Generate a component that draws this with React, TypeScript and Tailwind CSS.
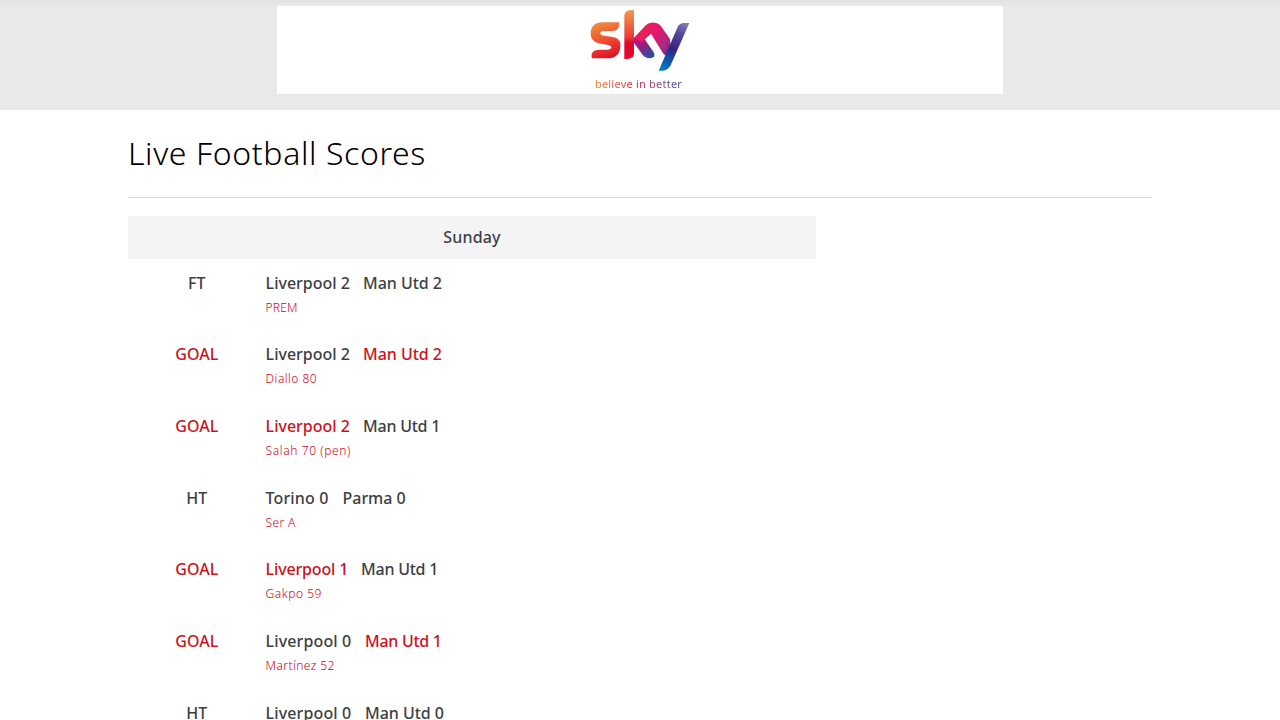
type Match = {
  status: string;
  home: string;
  away: string;
  note: string;
  scored?: "home" | "away";
  homeWidth: string;
  awayStyle?: string;
  homeStyle?: string;
  noteStyle: string;
};

const matches: Match[] = [
  { status: "FT", home: "Liverpool 2", away: "Man Utd 2", note: "PREM", homeWidth: "w-[97.5px]", noteStyle: "tracking-[0.2px]" },
  { status: "GOAL", home: "Liverpool 2", away: "Man Utd 2", note: "Diallo 80", scored: "away", homeWidth: "w-[97.5px]", noteStyle: "tracking-[0.48px]" },
  { status: "GOAL", home: "Liverpool 2", away: "Man Utd 1", note: "Salah 70 (pen)", scored: "home", homeWidth: "w-[97.5px]", awayStyle: "tracking-[-0.25px]", noteStyle: "tracking-[0.6px]" },
  { status: "HT", home: "Torino 0", away: "Parma 0", note: "Ser A", homeWidth: "w-[77px]", homeStyle: "tracking-[0.12px]", noteStyle: "tracking-[0.35px]" },
  { status: "GOAL", home: "Liverpool 1", away: "Man Utd 1", note: "Gakpo 59", scored: "home", homeWidth: "w-[95.5px]", homeStyle: "tracking-[-0.16px]", awayStyle: "tracking-[-0.25px]", noteStyle: "tracking-[0.52px]" },
  { status: "GOAL", home: "Liverpool 0", away: "Man Utd 1", note: "Martínez 52", scored: "away", homeWidth: "w-[99.5px]", homeStyle: "tracking-[0.12px]", awayStyle: "tracking-[-0.3px]", noteStyle: "tracking-[0.42px]" },
  { status: "HT", home: "Liverpool 0", away: "Man Utd 0", note: "PREM", homeWidth: "w-[99.5px]", homeStyle: "tracking-[0.12px]", noteStyle: "tracking-[0.2px]" },
];

function Logo() {
  return (
    <svg width="104" height="66" viewBox="54 24 312 198" fill="none" aria-hidden="true">
      <defs>
        <linearGradient id="s" gradientUnits="userSpaceOnUse" x1="85" y1="70" x2="125" y2="178">
          <stop stopColor="#f08a3c" />
          <stop offset="0.5" stopColor="#ee4a32" />
          <stop offset="1" stopColor="#dd0826" />
        </linearGradient>
        <linearGradient id="stem" gradientUnits="userSpaceOnUse" x1="177" y1="30" x2="177" y2="177">
          <stop stopColor="#f2994a" />
          <stop offset="0.55" stopColor="#eb3b36" />
          <stop offset="0.68" stopColor="#dc0929" />
          <stop offset="1" stopColor="#ed0030" />
        </linearGradient>
        <linearGradient id="leg" gradientUnits="userSpaceOnUse" x1="195" y1="105" x2="245" y2="175">
          <stop stopColor="#e6007e" />
          <stop offset="0.5" stopColor="#8b2382" />
          <stop offset="1" stopColor="#1756a8" />
        </linearGradient>
        <linearGradient id="arm" gradientUnits="userSpaceOnUse" x1="195" y1="85" x2="310" y2="160">
          <stop stopColor="#eb2749" />
          <stop offset="0.45" stopColor="#e5176f" />
          <stop offset="0.75" stopColor="#a32b86" />
          <stop offset="1" stopColor="#492882" />
        </linearGradient>
        <linearGradient id="tail" gradientUnits="userSpaceOnUse" x1="350" y1="70" x2="280" y2="212">
          <stop stopColor="#8878b4" />
          <stop offset="0.25" stopColor="#51459a" />
          <stop offset="0.55" stopColor="#36217e" />
          <stop offset="0.8" stopColor="#095bab" />
          <stop offset="1" stopColor="#087cc5" />
        </linearGradient>
      </defs>
      <path
        d="M98 67H148Q149 80 143 87Q138 93 128 93H101Q91 93 91 99Q91 105 102 107L124 110C144 112 153 122 151 140C149 163 137 174 114 175H66Q62 163 69 155Q75 149 86 149H114Q124 148 124 142Q123 136 112 134L93 131C72 127 62 117 62 101C62 80 74 67 98 67Z"
        fill="url(#s)"
      />
      <path d="M163 49Q163 34 177 31L192 30V160Q192 173 178 176L163 177Z" fill="url(#stem)" />
      <path d="M192 115L214 103L250 155Q256 164 251 171Q246 175 235 175Q225 174 218 165L192 128Z" fill="url(#leg)" />
      <path d="M192 113L228 75Q241 65 259 69Q268 72 273 79L300 117L304 169H293Q284 167 278 158L243 101L215 127L203 120Z" fill="url(#arm)" />
      <path d="M358 69L302 196Q295 211 279 212H266L323 81Q329 69 342 69Z" fill="url(#tail)" />
    </svg>
  );
}

function Fixture({ match }: { match: Match }) {
  const strong = "text-[#3d4043]";
  const red = "text-[#d0111b]";
  return (
    <li className="grid h-[71.67px] grid-cols-[137.6px_1fr] pt-3 text-[16px] leading-6 font-medium">
      <span className={`text-center ${match.status === "GOAL" ? red : strong}`}>{match.status}</span>
      <div>
        <p className="flex whitespace-nowrap">
          <span className={`${match.homeWidth} ${match.homeStyle ?? ""} ${match.scored === "home" ? red : strong}`}>{match.home}</span>
          <span className={`${match.awayStyle ?? "tracking-[-0.05px]"} ${match.scored === "away" ? red : strong}`}>{match.away}</span>
        </p>
        <p className={`pt-px text-[12px] leading-6 font-light text-[#d0021b] ${match.noteStyle}`}>{match.note}</p>
      </div>
    </li>
  );
}

export default function App() {
  return (
    <div className="h-[720px] overflow-hidden bg-white font-['Noto_Sans','Open_Sans',sans-serif]">
      <header className="flex h-[110px] justify-center bg-[linear-gradient(#e2e2e2,#e9e9e9_5px)] pt-1.5">
        <div className="flex h-[88px] w-[726px] flex-col items-center bg-white pt-0.5">
          <Logo />
          <p className="mr-[3px] bg-linear-to-r from-[#f08332] via-[#d21f55] to-[#304b9d] bg-clip-text text-[11px] leading-5 tracking-[0.22px] whitespace-nowrap text-transparent">
            believe in better
          </p>
        </div>
      </header>
      <main className="mx-auto w-[1024px]">
        <h1 className="flex h-[88px] items-center border-b border-[#dcdcdc] pb-0.5 text-[32px] font-light tracking-[0.62px] text-black">
          Live Football Scores
        </h1>
        <section className="mt-[18px] w-[688px]">
          <h2 className="flex h-[43px] items-center justify-center bg-[#f4f4f4] pb-0.5 text-[16px] font-medium tracking-[0.15px] text-[#3d4043]">
            Sunday
          </h2>
          <ul className="-mt-[0.3px]">
            {matches.map((match, index) => (
              <Fixture key={index} match={match} />
            ))}
          </ul>
        </section>
      </main>
    </div>
  );
}
